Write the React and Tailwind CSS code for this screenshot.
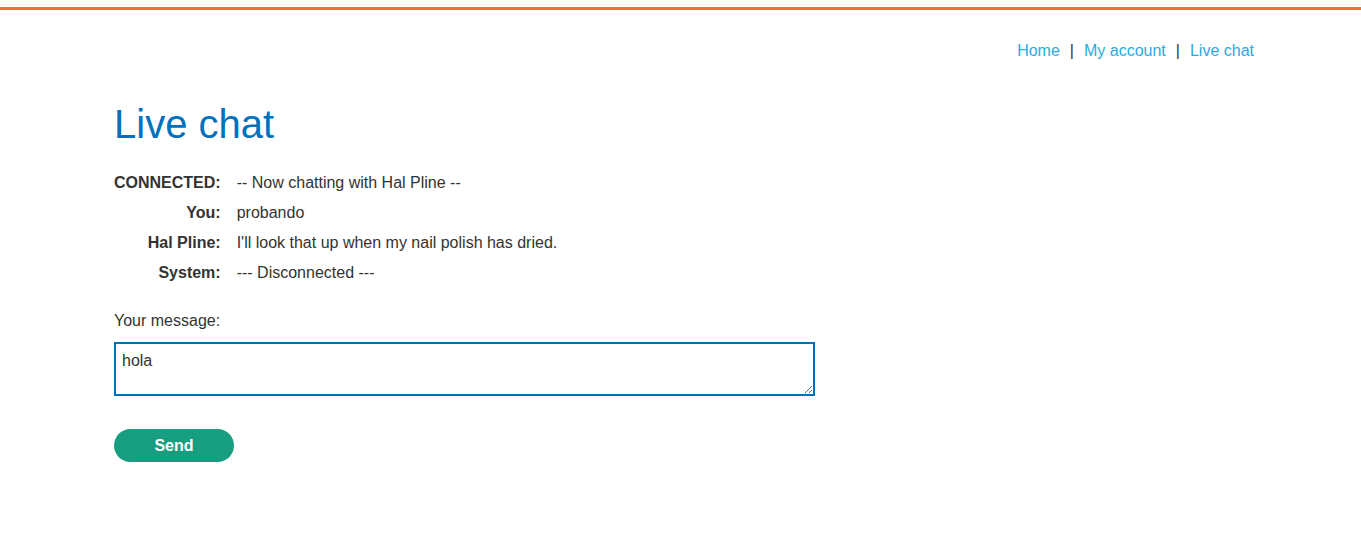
export default function App() {
  const rows = [
    ['CONNECTED:', '-- Now chatting with Hal Pline --'],
    ['You:', 'probando'],
    ['Hal Pline:', "I'll look that up when my nail polish has dried."],
    ['System:', '--- Disconnected ---'],
  ]

  return (
    <div className="min-h-screen bg-white font-['Liberation_Sans',Arial,sans-serif] text-[#333332]">
      {/* top accent line */}
      <div className="pt-[7px]">
        <div className="h-[3px] bg-[#f26a36]" />
      </div>

      <div className="w-[1140px] ml-[114px]">
        {/* nav */}
        <nav className="flex justify-end items-center pt-[31px] text-[16px] leading-[20px]">
          <a className="text-[#29abe2]">Home</a>
          <span className="mx-[10px] text-[#333332]">|</span>
          <a className="text-[#29abe2]">My account</a>
          <span className="mx-[10px] text-[#333332]">|</span>
          <a className="text-[#29abe2]">Live chat</a>
        </nav>

        <h1 className="mt-[39px] text-[40px] leading-[48px] text-[#0071bc]">Live chat</h1>

        <table className="mt-[20px] text-[16px] leading-[20px] border-collapse">
          <tbody>
            {rows.map(([who, msg]) => (
              <tr key={who}>
                <th className="text-right font-bold pr-4 py-[5px] align-top">{who}</th>
                <td className="py-[5px]">{msg}</td>
              </tr>
            ))}
          </tbody>
        </table>

        <form className="mt-[23px]">
          <label className="block text-[16px] leading-[20px]">Your message:</label>
          <textarea
            defaultValue="hola"
            className="block mt-[11px] w-[701px] h-[54px] border-2 border-[#0071bc] px-[6px] pt-[7px] pb-[3px] text-[16px] leading-[20px] text-[#333332] outline-none"
          />
          <button
            type="button"
            className="mt-[33px] w-[120px] h-[33px] rounded-full bg-[#179e80] text-white font-bold text-[16px]"
          >
            Send
          </button>
        </form>
      </div>
    </div>
  )
}
